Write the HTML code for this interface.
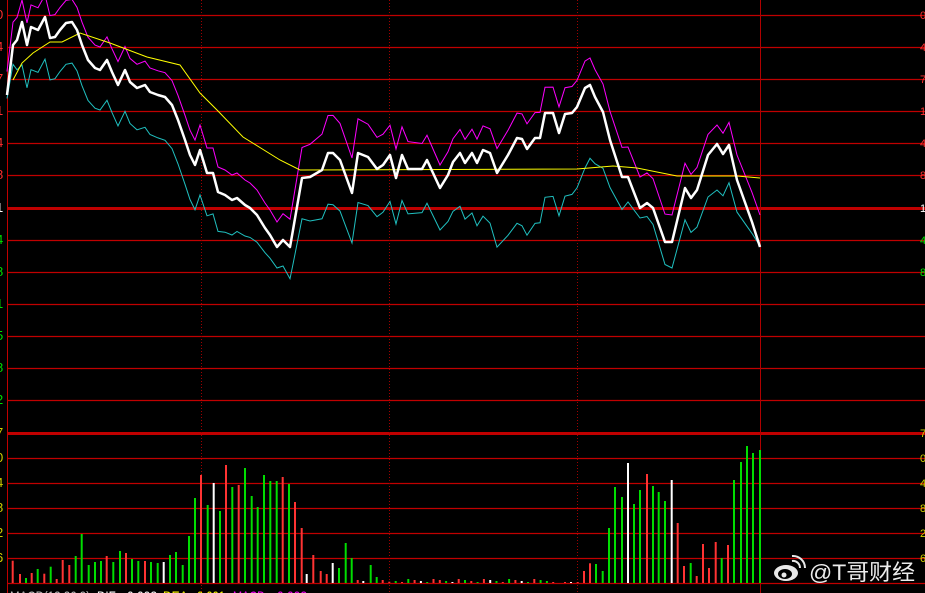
<!DOCTYPE html>
<html><head><meta charset="utf-8"><style>
html,body{margin:0;padding:0;background:#000;width:925px;height:593px;overflow:hidden}
svg{display:block}
.t{font-family:"Liberation Sans",sans-serif;font-size:13px}
</style></head><body>
<svg id="s" width="925" height="593" xmlns="http://www.w3.org/2000/svg">
<rect width="925" height="593" fill="#000"/>
<g id="grid"></g>
<line x1="7.5" y1="0" x2="7.5" y2="593" stroke="#c00000" stroke-width="1"/>
<line x1="201.5" y1="0" x2="201.5" y2="593" stroke="#a00000" stroke-dasharray="1,2"/>
<line x1="389.5" y1="0" x2="389.5" y2="593" stroke="#a00000" stroke-dasharray="1,2"/>
<line x1="577.5" y1="0" x2="577.5" y2="593" stroke="#a00000" stroke-dasharray="1,2"/>
<line x1="760.5" y1="0" x2="760.5" y2="593" stroke="#b00000"/>
<g id="bars"></g>
<g id="lines"></g>
<g class="t">
<text x="-4" y="19" fill="#ff3030">0</text><text x="-4" y="51" fill="#ff3030">4</text><text x="-4" y="83" fill="#ff3030">7</text>
<text x="-4" y="115" fill="#ff3030">1</text><text x="-4" y="147" fill="#ff3030">4</text><text x="-4" y="179" fill="#ff3030">8</text>
<text x="-4" y="212" fill="#fff">1</text><text x="-4" y="244" fill="#00e000">4</text><text x="-4" y="276" fill="#00e000">8</text>
<text x="-4" y="308" fill="#00e000">1</text><text x="-4" y="340" fill="#00e000">5</text><text x="-4" y="372" fill="#00e000">8</text>
<text x="-4" y="404" fill="#00e000">2</text><text x="-4" y="437" fill="#d0d000">7</text><text x="-4" y="462" fill="#d0d000">0</text>
<text x="-4" y="487" fill="#d0d000">4</text><text x="-4" y="512" fill="#d0d000">8</text><text x="-4" y="537" fill="#d0d000">2</text><text x="-4" y="562" fill="#d0d000">6</text>
<g font-size="11">
<text x="920" y="19" fill="#ff3030">0</text><text x="920" y="51" fill="#ff3030">4</text><text x="920" y="83" fill="#ff3030">7</text>
<text x="920" y="115" fill="#ff3030">1</text><text x="920" y="147" fill="#ff3030">4</text><text x="920" y="179" fill="#ff3030">8</text>
<text x="920" y="212" fill="#fff">1</text><text x="920" y="244" fill="#00e000">4</text><text x="920" y="276" fill="#00e000">8</text>
<text x="920" y="437" fill="#d0d000">7</text><text x="920" y="462" fill="#d0d000">0</text><text x="920" y="487" fill="#d0d000">4</text>
<text x="920" y="512" fill="#d0d000">8</text><text x="920" y="537" fill="#d0d000">2</text><text x="920" y="562" fill="#d0d000">6</text>
</g>
<text x="10" y="601" font-size="14" fill="#c0c0c0" textLength="80" lengthAdjust="spacingAndGlyphs">MACD(12,26,9)</text>
<text x="97" y="601" font-size="14" fill="#fff" textLength="22" lengthAdjust="spacingAndGlyphs">DIF:</text>
<text x="127" y="601" font-size="14" fill="#fff" textLength="30" lengthAdjust="spacingAndGlyphs">0.002</text>
<text x="163" y="601" font-size="14" fill="#ffff00" textLength="28" lengthAdjust="spacingAndGlyphs">DEA:</text>
<text x="197" y="601" font-size="14" fill="#ffff00" textLength="28" lengthAdjust="spacingAndGlyphs">0.001</text>
<text x="233" y="601" font-size="14" fill="#ff00ff" textLength="35" lengthAdjust="spacingAndGlyphs">MACD:</text>
<text x="277" y="601" font-size="14" fill="#ff00ff" textLength="30" lengthAdjust="spacingAndGlyphs">0.002</text>
</g>
<g>
<ellipse cx="786" cy="573" rx="12" ry="8" fill="#e8e8e8"/>
<ellipse cx="785" cy="574" rx="7" ry="5" fill="#000"/>
<circle cx="784" cy="575" r="2.5" fill="#e8e8e8"/>
<path d="M792 561 a7 7 0 0 1 8 7" stroke="#e8e8e8" stroke-width="2" fill="none"/>
<path d="M792 556 a12 12 0 0 1 13 12" stroke="#e8e8e8" stroke-width="2" fill="none"/>
<text x="809" y="580" font-family="'Liberation Sans','Noto Sans CJK SC',sans-serif" font-size="22" fill="#ececec" textLength="106" lengthAdjust="spacingAndGlyphs">@T哥财经</text>
</g>
</svg>
<script>
var NS="http://www.w3.org/2000/svg";
function el(p,t,a){var e=document.createElementNS(NS,t);for(var k in a)e.setAttribute(k,a[k]);document.getElementById(p).appendChild(e);return e;}
var ys=[15,47,79,111,143,175,208,240,272,304,336,368,400,433,458,483,508,533,558,583];
ys.forEach(function(y){var th=(y==208||y==433);el("grid","line",{x1:7,x2:925,y1:y+0.5,y2:y+0.5,stroke:"#c00000","stroke-width":th?3:1.2});});
var W=[[7,95],[13,45],[17,40],[22,22],[27,45],[31,27],[38,30],[45,17],[50,38],[55,37],[60,30],[66,23],[72,22],[77,30],[82,45],[88,60],[95,68],[100,70],[107,60],[112,72],[118,85],[125,70],[130,82],[137,88],[145,85],[150,92],[158,95],[165,97],[172,105],[178,120],[185,140],[190,155],[195,165],[200,150],[207,173],[213,173],[218,192],[225,195],[232,200],[237,198],[245,205],[250,208],[257,215],[265,228],[270,235],[277,247],[283,240],[290,247],[293,230],[302,178],[310,177],[322,170],[328,153],[333,153],[340,160],[352,193],[358,153],[368,157],[377,169],[383,165],[390,155],[396,178],[402,155],[408,169],[422,169],[427,160],[433,173],[440,188],[448,175],[453,162],[460,153],[465,163],[472,153],[477,163],[483,150],[490,153],[497,173],[508,155],[517,138],[522,139],[527,149],[535,138],[540,138],[545,113],[553,113],[559,133],[565,114],[572,113],[577,107],[585,88],[590,85],[595,97],[603,112],[610,140],[622,177],[628,177],[640,208],[647,203],[653,208],[665,242],[672,242],[685,188],[691,198],[697,190],[708,155],[717,144],[723,154],[729,145],[737,180],[752,222],[760,247]];
function interp(tab,x){for(var i=0;i<tab.length-1;i++){if(x<=tab[i+1][0]){var t=(x-tab[i][0])/(tab[i+1][0]-tab[i][0]);return tab[i][1]+t*(tab[i+1][1]-tab[i][1]);}}return tab[tab.length-1][1];}
var mo=[[0,-24],[22,-22],[100,-23],[200,-25],[277,-25],[300,-30],[330,-38],[440,-23],[520,-25],[590,-27],[640,-31],[672,-27],[717,-19],[760,-32]];
var co=[[0,-15],[22,43],[100,40],[200,45],[277,21],[300,40],[330,52],[440,42],[520,87],[585,80],[600,60],[640,10],[672,26],[717,46],[740,30],[760,-1]];
function pts(off){return W.map(function(p){var y=p[1]+(off?interp(off,p[0]):0);return p[0]+","+Math.max(-5,y).toFixed(1);}).join(" ");}
el("lines","polyline",{points:pts(co),fill:"none",stroke:"#20c0c0","stroke-width":1});
el("lines","polyline",{points:pts(mo),fill:"none",stroke:"#ff00ff","stroke-width":1});
var Y=[[13,80],[22,63],[33,53],[50,42],[62,42],[80,33],[110,43],[147,57],[180,65],[200,93],[217,110],[243,137],[280,160],[300,170],[577,169],[613,166],[637,168],[677,176],[737,176],[760,178]];
el("lines","polyline",{points:Y.map(function(p){return p.join(",")}).join(" "),fill:"none",stroke:"#ffff00","stroke-width":1});
el("lines","polyline",{points:pts(null),fill:"none",stroke:"#fff","stroke-width":2.5,"stroke-linejoin":"round"});
var xs=[38,60,78,95,113,133,152,170,188,208,227,245,266,285,303,320,340,360,378,396,415,435,453,473,491,510,528,548,567,585,603,623,641,660,678,697,716,735,755,773,792,811,830,848,867,885,905,920,940,962,980,998,1017,1037,1055,1073,1090,1112,1130,1148,1168,1187];
var ts=[422,462,474,459,447,461,440,477,420,435,408,342,435,426,423,408,426,393,399,417,423,423,426,429,426,405,396,435,348,234,165,255,189,273,135,201,195,144,228,261,165,183,183,171,192,246,324,462,405,453,462,429,444,369,414,480,483,435,471,480,485,483];
var cs="rrgrgrgrrrggggg rggrggrggwggggg rgwgrgrgggggg rgrrwrrrwgggrwggrrg".replace(/ /g,"");
var C={r:"#ff3333",g:"#00dd00",w:"#ffffff"};
var B=[];
for(var i=0;i<xs.length;i++)B.push([xs[i]/3,420+ts[i]/3,cs[i]]);
var x=402,sm="rgrwgrrgwrgrgrwgrgrwgrggr";for(var k=0;x<556;k++,x+=6.3)B.push([x,583-(1+(k*7%4)),sm[k%sm.length]]);
var z3=[[15,487,"r"],[33,487,"w"],[53,487,"r"],[72,453,"r"],[90,430,"r"],[108,432,"g"],[128,453,"g"],[147,324,"g"],[165,201,"g"],[186,231,"g"],[204,129,"w"],[222,252,"g"],[240,210,"g"],[261,162,"r"],[279,198,"g"],[296,216,"g"],[315,243,"g"],[335,180,"w"],[353,309,"r"],[372,438,"r"],[392,429,"g"],[410,468,"r"],[429,372,"r"],[447,444,"r"],[467,366,"r"],[485,414,"g"],[504,375,"r"],[522,180,"g"],[543,126,"g"],[561,78,"g"],[579,99,"g"],[600,90,"g"]];
z3.forEach(function(b){B.push([560+b[0]/3,420+b[1]/3,b[2]]);});
B.forEach(function(b){var top=Math.min(b[1],582);el("bars","rect",{x:(b[0]-1).toFixed(1),y:top.toFixed(1),width:2,height:(583-top).toFixed(1),fill:C[b[2]]||"#00dd00"});});
</script>
</body></html>
